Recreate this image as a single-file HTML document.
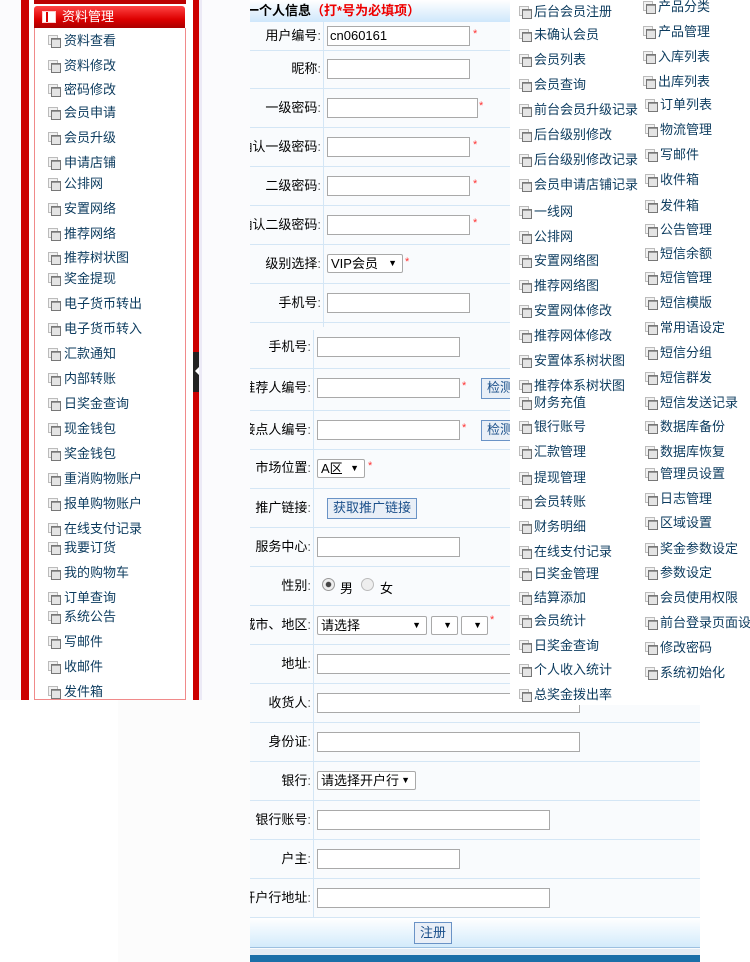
<!DOCTYPE html>
<html><head><meta charset="utf-8">
<style>
*{margin:0;padding:0;box-sizing:border-box}
body{width:750px;height:962px;overflow:hidden;position:relative;background:#fff;font:13px "Liberation Sans","Noto Sans CJK SC",sans-serif;color:#000}
.a{position:absolute}
.ic{position:absolute;width:11px;height:11px}
.ic:before{content:"";position:absolute;left:0;top:0;width:8px;height:8px;border:1px solid #bbb;background:#f2f2f2}
.ic:after{content:"";position:absolute;left:3px;top:3px;width:8px;height:8px;border:1px solid #777;background:#e4e4e4;box-shadow:inset 0 3px 0 -2px #999}
.mi{position:absolute;color:#0c3b5e;font-size:13px;white-space:nowrap;line-height:16px}
.lb{position:absolute;right:0;width:200px;text-align:right;white-space:nowrap;line-height:16px}
.lb i{font-style:normal;color:#555}
.in{position:absolute;height:20px;border:1px solid #a9a9a9;background:#fff;font-size:13px;padding-left:2px;line-height:18px}
.st{position:absolute;color:#f33;font-size:11px}
.hl{position:absolute;height:1px;background:#d4e6f5}
.sel{position:absolute;height:19px;border:1px solid #a9a9a9;background:#fff;font-size:13px;line-height:17px;padding-left:3px;border-radius:2px}
.sel b{position:absolute;right:5px;top:0;font-size:9px}
.btn{position:absolute;border:1px solid #6a93c6;background:#e9eff7;color:#1a4f8a;font-size:13px;line-height:18px;padding:0 5px}
</style></head><body>
<div class="a" style="left:0;top:0;width:250px;height:700px;background:#fbfbfd"></div>
<div class="a" style="left:21px;top:0;width:8px;height:700px;background:#cc0000"></div>
<div class="a" style="left:193px;top:0;width:6px;height:700px;background:#cc0000"></div>
<div class="a" style="left:199px;top:0;width:3px;height:700px;background:#eceaf6"></div>
<div class="a" style="left:29px;top:0;width:164px;height:700px;background:#fff"></div>
<div class="a" style="left:34px;top:0;width:152px;height:4px;background:#b00"></div>
<div class="a" style="left:34px;top:28px;width:152px;height:672px;border:1px solid #f08a8a;border-top:none"></div>
<div class="a" style="left:34px;top:6px;width:151px;height:22px;background:linear-gradient(#f44,#d00 60%,#a00);border-radius:3px 3px 0 0"></div>
<div class="a" style="left:42px;top:11px;width:14px;height:12px;background:#fff;border:1px solid #fcc"><div style="position:absolute;left:3px;top:0;width:2px;height:10px;background:#d00"></div></div>
<div class="a" style="left:62px;top:8px;color:#fff;font-size:13px;line-height:17px">资料管理</div>
<div class="a" style="left:193px;top:352px;width:6px;height:40px;background:#222"></div>
<div class="a" style="left:191px;top:367px;width:0;height:0;border:4px solid transparent;border-right:4px solid #fff"></div>
<div id="L"></div>
<div class="a" style="left:118px;top:700px;width:132px;height:262px;background:#fcfcfc"></div>
<div class="a" style="left:250px;top:0;width:450px;height:962px;overflow:hidden;background:#f9fbfd">
 <div class="a" style="left:0;top:0;width:450px;height:22px;background:linear-gradient(#fff,#cfe7fb)"></div>
 <div class="a" style="left:-4px;top:2px;font-weight:bold;font-size:13px;line-height:17px;white-space:nowrap">一个人信息<span style="color:#e00">（打*号为必填项）</span></div>
 <div class="a" style="left:73px;top:22px;width:1px;height:305px;background:#d4e6f5"></div>
 <div class="a" style="left:63px;top:330px;width:1px;height:588px;background:#d4e6f5"></div>
 <div id="F"></div>
 <div class="a" style="left:0;top:918px;width:450px;height:30px;background:linear-gradient(#fff,#d3ebfb);border-bottom:1px solid #9cc0e0"></div>
 <div class="btn" style="left:164px;top:922px;height:22px;padding:1px 5px">注册</div>
 <div class="a" style="left:0;top:949px;width:450px;height:6px;background:#e3ecf4"></div>
 <div class="a" style="left:0;top:955px;width:450px;height:7px;background:#1a6fa8"></div>
</div>
<div class="a" style="left:510px;top:0;width:240px;height:705px;background:#fff"></div>
<div id="R"></div>
<script>
function add(id,html){document.getElementById(id).insertAdjacentHTML('beforeend',html)}
var L=[["资料查看",41],["资料修改",66],["密码修改",90],["会员申请",113],["会员升级",138],["申请店铺",163],["公排网",184],["安置网络",209],["推荐网络",234],["推荐树状图",258],["奖金提现",279],["电子货币转出",304],["电子货币转入",329],["汇款通知",354],["内部转账",379],["日奖金查询",404],["现金钱包",429],["奖金钱包",454],["重消购物账户",479],["报单购物账户",504],["在线支付记录",529],["我要订货",548],["我的购物车",573],["订单查询",598],["系统公告",617],["写邮件",642],["收邮件",667],["发件箱",692]];
L.forEach(function(x){add('L','<i class="ic" style="left:48px;top:'+(x[1]-6)+'px"></i><span class="mi" style="left:64px;top:'+(x[1]-8)+'px">'+x[0]+'</span>')});
var C1=["后台会员注册","未确认会员","会员列表","会员查询","前台会员升级记录","后台级别修改","后台级别修改记录","会员申请店铺记录","一线网","公排网","安置网络图","推荐网络图","安置网体修改","推荐网体修改","安置体系树状图","推荐体系树状图","财务充值","银行账号","汇款管理","提现管理","会员转账","财务明细","在线支付记录","日奖金管理","结算添加","会员统计","日奖金查询","个人收入统计","总奖金拨出率"];
var Y1=[12,35,60,85,110,135,160,185,212,237,261,286,311,336,361,386,403,427,452,478,502,527,552,574,598,621,646,670,695];
var C2=["产品分类","产品管理","入库列表","出库列表","订单列表","物流管理","写邮件","收件箱","发件箱","公告管理","短信余额","短信管理","短信模版","常用语设定","短信分组","短信群发","短信发送记录","数据库备份","数据库恢复","管理员设置","日志管理","区域设置","奖金参数设定","参数设定","会员使用权限","前台登录页面设定","修改密码","系统初始化"];
var Y2=[7,32,57,82,105,130,155,180,206,230,254,278,303,328,353,378,403,427,452,474,499,523,549,573,598,623,648,673];
C1.forEach(function(t,i){add('R','<i class="ic" style="left:519px;top:'+(Y1[i]-6)+'px"></i><span class="mi" style="left:534px;top:'+(Y1[i]-8)+'px">'+t+'</span>')});
C2.forEach(function(t,i){var x=i>=4?645:643;add('R','<i class="ic" style="left:'+x+'px;top:'+(Y2[i]-6)+'px"></i><span class="mi" style="left:'+(x+15)+'px;top:'+(Y2[i]-8)+'px">'+t+'</span>')});
function lb(t,y,r){return '<span class="lb" style="left:'+(r-200)+'px;top:'+(y-8)+'px">'+t+'<i>:</i></span>'}
function inp(x,y,w,v){return '<div class="in" style="left:'+x+'px;top:'+(y-10)+'px;width:'+w+'px">'+(v||'')+'</div>'}
function st(x,y){return '<span class="st" style="left:'+x+'px;top:'+(y-6)+'px">*</span>'}
function hl(y,x,w){return '<div class="hl" style="left:'+(x||0)+'px;top:'+y+'px;width:'+(w||450)+'px"></div>'}
var f='';
[50,88,127,166,205,244,283,322].forEach(function(y){f+=hl(y)});
[368,410,449,488,527,566,605,644,683,722,761,800,839,878,917].forEach(function(y){f+=hl(y)});
f+=lb('用户编号',36,71)+inp(77,36,143,'cn060161')+st(223,34);
f+=lb('昵称',69,71)+inp(77,69,143);
f+=lb('一级密码',108,71)+inp(77,108,151)+st(229,106);
f+=lb('确认一级密码',147,71)+inp(77,147,143)+st(223,145);
f+=lb('二级密码',186,71)+inp(77,186,143)+st(223,184);
f+=lb('确认二级密码',225,71)+inp(77,225,143)+st(223,223);
f+=lb('级别选择',264,71)+'<div class="sel" style="left:77px;top:254px;width:76px">VIP会员<b>▼</b></div>'+st(155,262);
f+=lb('手机号',303,71)+inp(77,303,143);
f+=lb('手机号',347,61)+inp(67,347,143);
f+=lb('推荐人编号',388,61)+inp(67,388,143)+st(212,386)+'<div class="btn" style="left:231px;top:378px;height:21px">检测</div>';
f+=lb('接点人编号',430,61)+inp(67,430,143)+st(212,428)+'<div class="btn" style="left:231px;top:420px;height:21px">检测</div>';
f+=lb('市场位置',468,61)+'<div class="sel" style="left:67px;top:459px;width:48px">A区<b>▼</b></div>'+st(118,466);
f+=lb('推广链接',508,61)+'<div class="btn" style="left:77px;top:498px;height:21px">获取推广链接</div>';
f+=lb('服务中心',547,61)+inp(67,547,143);
f+=lb('性别',586,61)+'<span class="a" style="left:72px;top:578px;width:13px;height:13px;border-radius:50%;border:1px solid #999;background:radial-gradient(#444 30%,#eee 40%)"></span><span class="a" style="left:90px;top:578px">男</span><span class="a" style="left:111px;top:578px;width:13px;height:13px;border-radius:50%;border:1px solid #bbb;background:#eee"></span><span class="a" style="left:130px;top:578px">女</span>';
f+=lb('城市、地区',625,61)+'<div class="sel" style="left:67px;top:616px;width:110px">请选择<b>▼</b></div><div class="sel" style="left:181px;top:616px;width:27px"><b>▼</b></div><div class="sel" style="left:211px;top:616px;width:27px"><b>▼</b></div>'+st(240,620);
f+=lb('地址',664,61)+inp(67,664,263);
f+=lb('收货人',703,61)+inp(67,703,263);
f+=lb('身份证',742,61)+inp(67,742,263);
f+=lb('银行',781,61)+'<div class="sel" style="left:67px;top:771px;width:99px">请选择开户行<b>▼</b></div>';
f+=lb('银行账号',820,61)+inp(67,820,233);
f+=lb('户主',859,61)+inp(67,859,143);
f+=lb('开户行地址',898,61)+inp(67,898,233);
add('F',f);
</script>
</body></html>
